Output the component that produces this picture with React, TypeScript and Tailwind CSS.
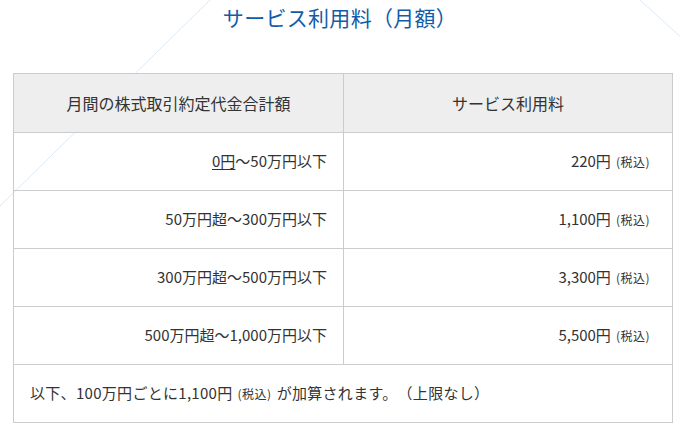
const rows = [
  { range: "50万円超～300万円以下", fee: "1,100円" },
  { range: "300万円超～500万円以下", fee: "3,300円" },
  { range: "500万円超～1,000万円以下", fee: "5,500円" },
];

function TaxNote() {
  return <span className="ml-[5px] text-[12px] tracking-[0.5px]">(税込)</span>;
}

export default function App() {
  return (
    <div
      className="relative h-[428px] w-[680px] overflow-hidden bg-white text-[#333] [text-spacing-trim:space-all]"
      style={{ fontFamily: '"Noto Sans CJK JP", "Noto Sans", sans-serif' }}
    >
      {/* faint background lines */}
      <svg className="absolute inset-0" width="680" height="428">
        <line x1="210" y1="0" x2="0" y2="206" stroke="#dce9f8" strokeWidth="1" />
        <line x1="640" y1="0" x2="684" y2="40" stroke="#dce9f8" strokeWidth="1" />
      </svg>

      <div className="relative">
        <h2 className="text-center text-[21px] leading-[34px] tracking-[0.3px] text-[#135ba8]">
          サービス利用料（月額）
        </h2>

        <div className="ml-[13px] mt-[39px] w-[660px] border border-[#ccc] text-[15px]">
          <div className="grid h-[59px] grid-cols-[330px_1fr] border-b border-[#ccc] bg-[#eee] text-[16px]">
            <div className="flex items-center justify-center border-r border-[#ccc]">
              月間の株式取引約定代金合計額
            </div>
            <div className="flex items-center justify-center">サービス利用料</div>
          </div>

          <div className="grid h-[58px] grid-cols-[330px_1fr] border-b border-[#ccc]">
            <div className="flex items-center justify-end border-r border-[#ccc] pr-[16px]">
              <span className="underline underline-offset-2">0円</span>～50万円以下
            </div>
            <div className="flex items-center justify-end pr-[22px]">
              220円
              <TaxNote />
            </div>
          </div>

          {rows.map((r) => (
            <div
              key={r.range}
              className="grid h-[58px] grid-cols-[330px_1fr] border-b border-[#ccc]"
            >
              <div className="flex items-center justify-end border-r border-[#ccc] pr-[16px]">
                {r.range}
              </div>
              <div className="flex items-center justify-end pr-[22px]">
                {r.fee}
                <TaxNote />
              </div>
            </div>
          ))}

          <div className="flex h-[57px] items-center pl-[16px] tracking-[0.3px]">
            以下、100万円ごとに1,100円
            <span className="mx-[5px] text-[12px] tracking-[0.5px]">(税込)</span>
            が加算されます。（上限なし）
          </div>
        </div>
      </div>
    </div>
  );
}
